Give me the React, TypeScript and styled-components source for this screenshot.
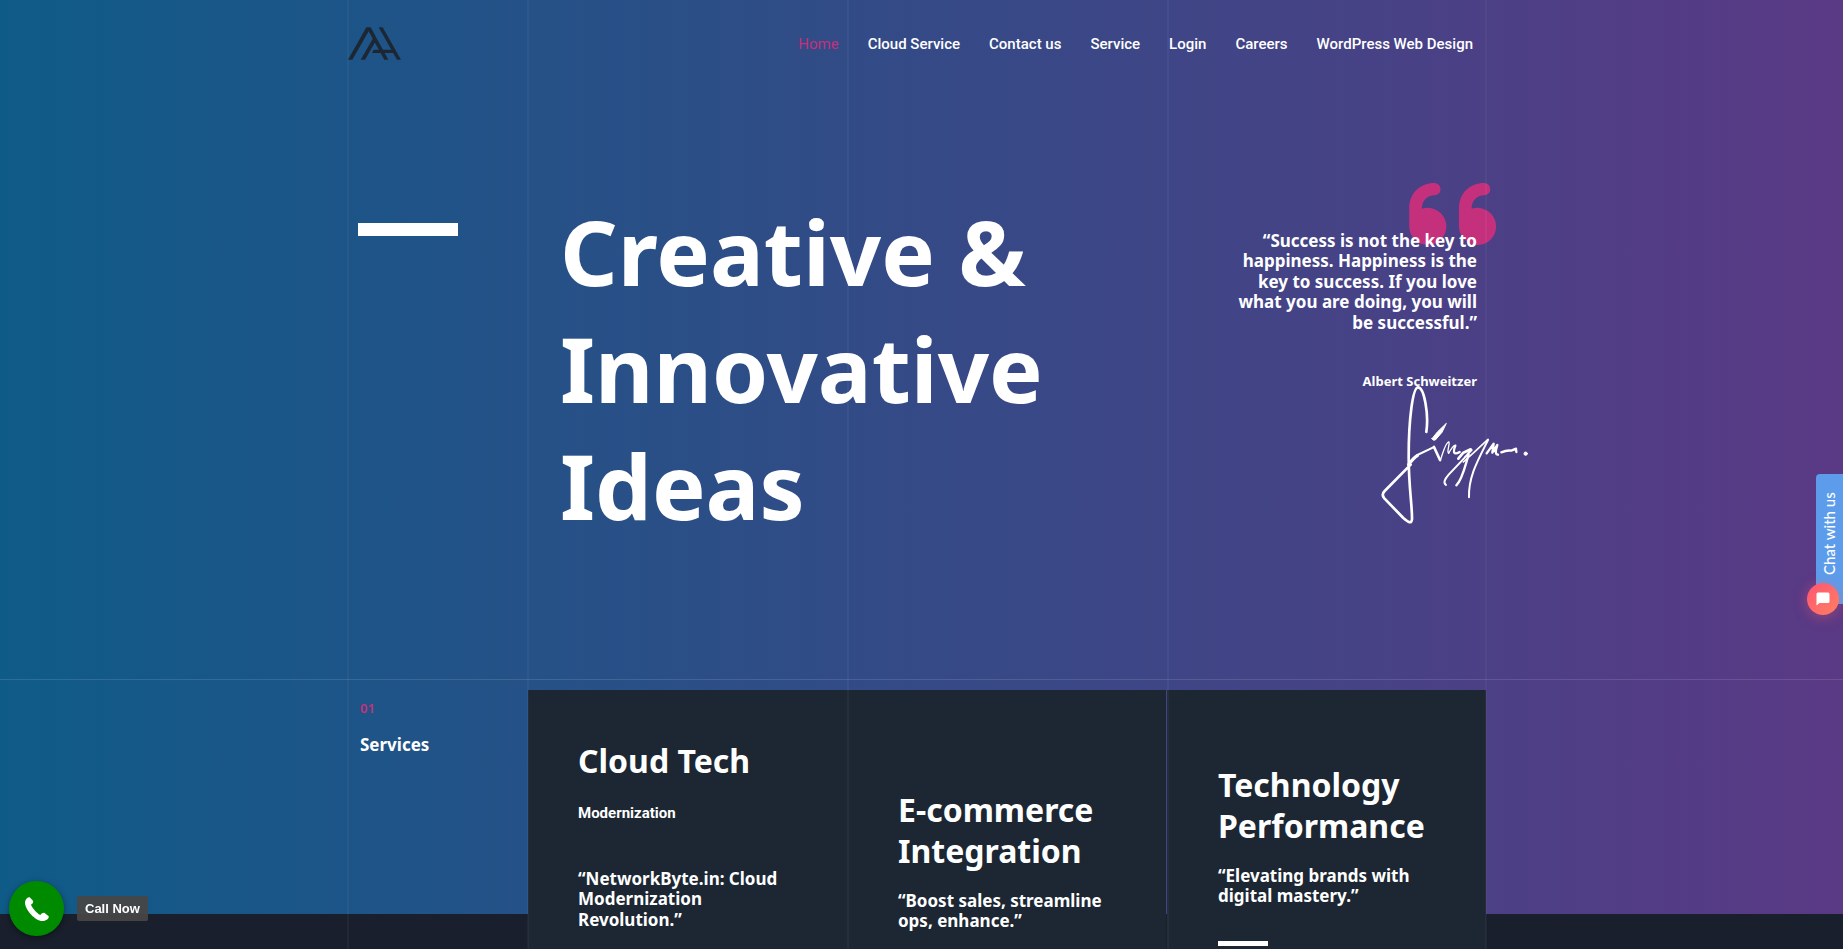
import React from "react";
import styled, { createGlobalStyle } from "styled-components";

const GlobalStyle = createGlobalStyle`
  *, *::before, *::after { box-sizing: border-box; }
  body {
    margin: 0;
    background: #191f2c;
    color: #fff;
    font-family: "Noto Sans", sans-serif;
  }
  h1, h2, h3, p, blockquote, figure { margin: 0; }
`;

const columns = "180px repeat(3, minmax(0, 1fr))";

const Page = styled.div`
  position: relative;
  display: flex;
  flex-direction: column;
  min-height: 100vh;
  overflow-x: hidden;
  background: linear-gradient(90deg, #0f5b88 0%, #5a3985 100%) top / 100% calc(100% - 35px)
    no-repeat #191f2c;
`;

const Container = styled.div`
  width: 100%;
  max-width: 1149px;
  margin: 0 auto;
  padding-right: 9px;
`;

const GuideLayer = styled.div`
  position: absolute;
  inset: 0;
  z-index: 1;
  pointer-events: none;
`;

const Guides = styled(Container)`
  display: grid;
  grid-template-columns: ${columns};
  height: 100%;
`;

const Guide = styled.span<{ $last?: boolean }>`
  border-left: 2px solid rgba(255, 255, 255, 0.04);
  border-right: ${(p) => (p.$last ? "2px solid rgba(255, 255, 255, 0.04)" : "0")};
`;

const Header = styled(Container)`
  display: flex;
  align-items: center;
  justify-content: space-between;
  height: 88px;
`;

const LogoLink = styled.a`
  display: block;
  padding: 0 0 2px 1px;
  color: #1c2733;
  svg { display: block; }
`;

const Nav = styled.nav`
  display: flex;
  gap: 29px;
  padding-right: 14px;
`;

const NavLink = styled.a<{ $active?: boolean }>`
  font: ${(p) => (p.$active ? 400 : 500)} 15px/20px Roboto, sans-serif;
  color: ${(p) => (p.$active ? "#c5307d" : "#fff")};
  text-decoration: none;
`;

const Hero = styled(Container)`
  display: grid;
  grid-template-columns: ${columns};
  height: 591px;
  padding-top: 105px;
`;

const Dash = styled.span<{ $small?: boolean }>`
  display: block;
  width: ${(p) => (p.$small ? 50 : 100)}px;
  height: ${(p) => (p.$small ? 5 : 13)}px;
  margin: ${(p) => (p.$small ? "34px 0 0" : "30px 0 0 11px")};
  background: #fff;
`;

const Title = styled.h1`
  grid-column: 2 / 4;
  padding-left: 33px;
  font-size: 90px;
  font-weight: 700;
  line-height: 117px;
`;

const Quote = styled.figure`
  position: relative;
  padding: 38px 10px 0 60px;
  text-align: right;
`;

const QuoteMark = styled.svg`
  position: absolute;
  top: -10px;
  right: -10px;
  fill: #c5307d;
`;

const QuoteText = styled.blockquote`
  position: relative;
  font-size: 17px;
  font-weight: 700;
  line-height: 1.2;
`;

const Author = styled.figcaption`
  margin-top: 39px;
  font-size: 13px;
  font-weight: 700;
  line-height: 18px;
`;

const Signature = styled.svg`
  position: absolute;
  top: 192px;
  right: -46px;
  fill: none;
  stroke: #fff;
  stroke-linecap: round;
  stroke-linejoin: round;
`;

const Services = styled.section`
  flex: 1;
  display: flex;
  border-top: 1px solid rgba(255, 255, 255, 0.12);
`;

const ServiceGrid = styled(Container)`
  display: grid;
  grid-template-columns: ${columns};
  padding-top: 10px;
`;

const Intro = styled.div`
  padding: 9px 13px 0;
`;

const Index = styled.p`
  color: #c5307d;
  font-size: 13px;
  font-weight: 600;
  line-height: 18px;
`;

const IntroTitle = styled.h2`
  margin-top: 18px;
  font-size: 17px;
  font-weight: 700;
  line-height: 1.2;
`;

const Card = styled.article<{ $top: number; $gap?: boolean; $flush?: boolean }>`
  margin-left: ${(p) => (p.$flush ? 0 : 1)}px;
  margin-right: ${(p) => (p.$gap ? 1 : -1)}px;
  padding: ${(p) => p.$top}px 49px 0 ${(p) => (p.$flush ? 51 : 50)}px;
  background: #1c2733;
`;

const CardTitle = styled.h3`
  font-size: 32px;
  font-weight: 700;
  line-height: 41px;
`;

const CardLabel = styled.p`
  margin: 22px 0 46px;
  font: 700 15px/20px Roboto, sans-serif;
`;

const CardText = styled.p`
  margin-top: 20px;
  font-size: 17px;
  font-weight: 700;
  line-height: 1.2;
`;

const Chat = styled.aside`
  position: fixed;
  top: 474px;
  right: 0;
  z-index: 3;
`;

const ChatTab = styled.button`
  display: block;
  width: 27px;
  height: 130px;
  padding: 10px 0 0;
  border: 0;
  border-radius: 0 4px 4px 0;
  background: #5c9ceb;
  color: #fff;
  font: 500 15px/25px Lato, sans-serif;
  writing-mode: vertical-rl;
  rotate: 180deg;
`;

const ChatBubble = styled.button`
  position: absolute;
  top: 109px;
  right: 4px;
  display: grid;
  place-items: center;
  width: 32px;
  height: 32px;
  padding: 0;
  border: 0;
  border-radius: 50%;
  background: linear-gradient(135deg, #ff5572, #ff7f62);
  box-shadow: 0 2px 14px rgba(255, 90, 110, 0.4);
`;

const Call = styled.a`
  position: fixed;
  left: 9px;
  bottom: 13px;
  z-index: 3;
  display: flex;
  align-items: center;
  gap: 13px;
  color: #fff;
  text-decoration: none;
`;

const CallDisc = styled.span`
  display: grid;
  place-items: center;
  width: 55px;
  height: 55px;
  border-radius: 50%;
  background: #008a00;
  box-shadow: 0 2px 6px rgba(0, 0, 0, 0.4);
`;

const CallLabel = styled.span`
  padding: 0 8px;
  border-radius: 2px;
  background: rgba(70, 70, 70, 0.94);
  font: 700 13px/25px "Liberation Sans", sans-serif;
`;

const links = [
  "Home",
  "Cloud Service",
  "Contact us",
  "Service",
  "Login",
  "Careers",
  "WordPress Web Design",
];

export default function App() {
  return (
    <>
      <GlobalStyle />
      <Page>
        <GuideLayer aria-hidden="true">
          <Guides>
            <Guide />
            <Guide />
            <Guide />
            <Guide $last />
          </Guides>
        </GuideLayer>

        <Header as="header">
          <LogoLink href="#" aria-label="Homepage">
            <svg width="53" height="33" viewBox="54 81 159 99" fill="currentColor">
              <path d="M54 179 109 82H122L175 179H163L116 94 67 179Z" />
              <path d="M92 179 130 113 137 124 105 179Z" />
              <path d="M146 82H158L213 179H201Z" />
              <path d="M131 149H192L196 159H126Z" />
            </svg>
          </LogoLink>
          <Nav>
            {links.map((label, i) => (
              <NavLink key={label} href="#" $active={i === 0}>
                {label}
              </NavLink>
            ))}
          </Nav>
        </Header>

        <Hero as="section">
          <div>
            <Dash />
          </div>
          <Title>
            Creative &amp;
            <br />
            Innovative
            <br />
            Ideas
          </Title>
          <Quote>
            <QuoteMark width="88" height="62" viewBox="0 0 264 187" aria-hidden="true">
              <path d="M0 76C0 30 34 0 76 0a18 18 0 0 1 0 37C54 37 38 54 38 78q8-3 19-3a56 56 0 1 1-57 56Z" />
              <path d="M150 76C150 30 184 0 226 0a18 18 0 0 1 0 37C204 37 188 54 188 78q8-3 19-3a56 56 0 1 1-57 56Z" />
            </QuoteMark>
            <QuoteText>
              “Success is not the key to happiness. Happiness is the key to success. If you love
              what you are doing, you will be successful.”
            </QuoteText>
            <Author>Albert Schweitzer</Author>
            <Signature width="153" height="140" viewBox="90 75 459 420" aria-hidden="true">
              <path
                strokeWidth="8"
                d="M229 216C237 160 222 84 205 82 188 80 176 180 176 290 176 380 187 440 186 478 184 492 176 488 160 474L103 415C95 406 97 400 104 393L182 314"
              />
              <path strokeWidth="10" d="M176 314Q190 294 202 287" />
              <path strokeWidth="6" d="M202 285 250 262" />
              <path fill="#fff" strokeWidth="3" d="M246 236 262 216 289 190 276 217 256 240Q248 243 246 236Z" />
              <path strokeWidth="8" d="M252 261 270 300" />
              <path
                strokeWidth="4"
                d="M271 302C279 275 290 245 297 246 300 255 289 275 296 280 302 268 312 254 316 257"
              />
              <path strokeWidth="7" d="M316 257C307 280 313 285 329 276" />
              <path strokeWidth="8" d="M325 296 340 278 362 268" />
              <path strokeWidth="6" d="M344 292 365 270M360 272 350 287 296 344C284 358 279 368 288 375" />
              <path strokeWidth="7" d="M356 284C346 315 337 360 319 376" />
              <path strokeWidth="5" d="M340 306 372 277 414 238" />
              <path strokeWidth="6" d="M414 240C384 300 355 350 357 412" />
              <path strokeWidth="7" d="M410 280 431 251 427 278 442 255Q432 284 444 284" />
              <path strokeWidth="7" d="M454 277Q470 270 484 272L498 266 499 276" />
              <circle cx="527" cy="281" r="5" fill="#fff" strokeWidth="3" />
            </Signature>
          </Quote>
        </Hero>

        <Services>
          <ServiceGrid>
            <Intro>
              <Index>01</Index>
              <IntroTitle>Services</IntroTitle>
            </Intro>
            <Card $top={50}>
              <CardTitle>Cloud Tech</CardTitle>
              <CardLabel>Modernization</CardLabel>
              <CardText>“NetworkByte.in: Cloud Modernization Revolution.”</CardText>
            </Card>
            <Card $top={99} $gap>
              <CardTitle>E-commerce Integration</CardTitle>
              <CardText>“Boost sales, streamline ops, enhance.”</CardText>
            </Card>
            <Card $top={74} $gap $flush>
              <CardTitle>Technology Performance</CardTitle>
              <CardText>“Elevating brands with digital mastery.”</CardText>
              <Dash $small />
            </Card>
          </ServiceGrid>
        </Services>

        <Chat>
          <ChatTab type="button">Chat with us</ChatTab>
          <ChatBubble type="button" aria-label="Open chat">
            <svg width="14" height="14" viewBox="0 0 14 14" fill="#fff">
              <path d="M2 0.5H12Q13.5 0.5 13.5 2V9.5Q13.5 11 12 11H3.5L0.5 13.5V2Q0.5 0.5 2 0.5Z" />
            </svg>
          </ChatBubble>
        </Chat>

        <Call href="tel:">
          <CallDisc>
            <svg width="24" height="24" viewBox="0 0 72 72" fill="#fff">
              <path d="M0 16C1 6 9 0 14 1L24 11C26 18 22 20 18 23 21 32 35 48 46 54 50 49 55 46 59 48L71 58C73 65 62 72 52 72 30 72-1 36 0 16Z" />
            </svg>
          </CallDisc>
          <CallLabel>Call Now</CallLabel>
        </Call>
      </Page>
    </>
  );
}
